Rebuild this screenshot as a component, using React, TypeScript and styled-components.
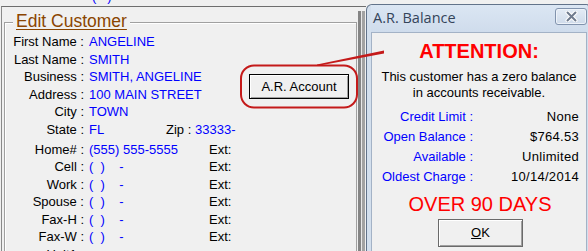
import React from "react";
import styled, { createGlobalStyle } from "styled-components";

const GlobalStyle = createGlobalStyle`
  html, body { margin: 0; padding: 0; background: #f0f0f0; overflow: hidden; }
  body { font-family: "Liberation Sans", Arial, sans-serif; font-size: 13px; color: #000; }
  #root { width: 588px; height: 251px; overflow: hidden; position: relative; }
  * { box-sizing: border-box; }
`;

const Page = styled.div`
  position: relative;
  width: 588px;
  height: 251px;
  overflow: hidden;
  display: flex;
  align-items: flex-start;
`;

/* ---------- left: Edit Customer window ---------- */
const LeftWindow = styled.div`
  flex: none;
  width: 365px;
  height: 251px;
  margin-left: 1px;
  display: flex;
  flex-direction: column;
`;

const TopStrip = styled.div`
  flex: none;
  height: 6px;
  overflow: hidden;
  padding-left: 91px;
`;

const ClippedText = styled.div`
  color: #0000ff;
  white-space: pre;
  line-height: 13px;
  margin-top: -10px;
`;

const Frame = styled.div`
  flex: 1;
  min-height: 0;
  overflow: hidden;
  display: flex;
  align-items: flex-start;
  border-top: 1px solid #6e6e6e;
  border-left: 1px solid #8a8a8a;
`;

const GroupBox = styled.div`
  flex: none;
  width: 353px;
  height: 240px;
  margin: 15px 0 0 2px;
  border: 1px solid #a0a0a0;
  border-bottom: none;
  box-shadow: inset 1px 1px 0 #ffffff;
`;

const Legend = styled.div`
  width: fit-content;
  margin: -12px 0 0 8px;
  padding: 0 3px;
  background: #f0f0f0;
  font-size: 17.5px;
  line-height: 20px;
  color: #8a4500;
  text-decoration: underline;
  text-underline-offset: 2px;
`;

const FormBody = styled.div`
  display: flex;
  margin-top: 2.25px;
`;

const Fields = styled.div`
  width: 244px;
  display: flex;
  flex-direction: column;
`;

const Row = styled.div<{ $gap?: number }>`
  display: flex;
  height: 17.5px;
  line-height: 17.5px;
  white-space: nowrap;
  margin-top: ${(p) => p.$gap ?? 0}px;
`;

const Label = styled.span`
  flex: none;
  width: 79px;
  text-align: right;
`;

const Value = styled.span<{ $w?: number }>`
  flex: none;
  margin-left: 5px;
  color: #0000ff;
  white-space: pre;
  width: ${(p) => (p.$w ? `${p.$w}px` : "auto")};
`;

const SubLabel = styled.span<{ $w?: number }>`
  flex: none;
  width: ${(p) => (p.$w ? `${p.$w}px` : "auto")};
`;

const SubValue = styled.span`
  color: #0000ff;
`;

const Side = styled.div`
  padding-top: 40.75px;
`;

const ARButton = styled.button`
  width: 100px;
  height: 25px;
  padding: 0;
  border: 1px solid #000;
  background: #f0f0f0;
  box-shadow: inset 1px 1px 0 #ffffff, inset -1px -1px 0 #a0a0a0;
  font-family: "Liberation Sans", Arial, sans-serif;
  font-size: 13px;
  color: #000;
`;

const Bar = styled.div`
  flex: none;
  width: 7px;
  height: 240px;
  margin: 4px 0 0 1px;
  border-left: 3px solid #858585;
  border-right: 3px solid #a2a2a2;
  background: #e8e8e8;
`;

/* ---------- right: A.R. Balance dialog ---------- */
const Dialog = styled.div`
  flex: none;
  width: 226px;
  height: 250px;
  margin-top: 4px;
  border: 1px solid #62738a;
  border-bottom: none;
  border-radius: 6px 6px 0 0;
  background: #d3dfed;
  padding: 0 4px;
  display: flex;
  flex-direction: column;
`;

const TitleBar = styled.div`
  flex: none;
  height: 27px;
  display: flex;
  justify-content: space-between;
  align-items: flex-start;
  padding-left: 2px;
  background: linear-gradient(#dbe6f3, #cfdcec);
`;

const Title = styled.span`
  font-family: "Open Sans", "Liberation Sans", sans-serif;
  font-size: 14.5px;
  line-height: 26px;
  color: #34445a;
`;

const CloseButton = styled.div`
  width: 32px;
  height: 17px;
  margin-top: 3px;
  border: 1px solid #8193ad;
  border-radius: 3px;
  background: linear-gradient(#e4ecf6, #cfdbea);
  box-shadow: inset 0 0 0 1px #eef3f9;
  display: flex;
  align-items: center;
  justify-content: center;
`;

const Client = styled.div`
  flex: 1;
  background: #f0f0f0;
  border: 1px solid #a3b2c6;
  border-bottom: none;
  display: flex;
  flex-direction: column;
  align-items: center;
`;

const Attention = styled.div`
  margin-top: 5.7px;
  font-size: 20px;
  line-height: 24px;
  font-weight: bold;
  color: #ff0000;
`;

const Message = styled.div`
  margin-top: 6.3px;
  line-height: 16px;
  text-align: center;
`;

const Info = styled.div`
  margin-top: 6px;
  align-self: stretch;
  display: flex;
  flex-direction: column;
`;

const InfoRow = styled.div`
  display: flex;
  height: 20px;
  line-height: 20px;
  white-space: nowrap;
`;

const InfoLabel = styled.span`
  flex: none;
  width: 101px;
  text-align: right;
  color: #0000ff;
`;

const InfoValue = styled.span`
  flex: 1;
  text-align: right;
  padding-right: 7px;
  letter-spacing: 0.3px;
`;

const Warning = styled.div`
  margin-top: 4.7px;
  font-size: 20px;
  line-height: 24px;
  color: #ff0000;
  padding-left: 2px;
`;

const OkButton = styled.button`
  margin-top: 3.3px;
  margin-left: 3px;
  width: 85px;
  height: 28px;
  padding: 0;
  border: 1px solid #6a6a6a;
  background: #f0f0f0;
  box-shadow: inset 1px 1px 0 #ffffff, inset -1px -1px 0 #a0a0a0;
  font-family: "Liberation Sans", Arial, sans-serif;
  font-size: 13px;
  color: #000;
`;

const Underlined = styled.span`
  text-decoration: underline;
`;

const Annotation = styled.svg`
  position: absolute;
  left: 0;
  top: 0;
  pointer-events: none;
`;

type Field = { label: string; value: string };

const topFields: Field[] = [
  { label: "First Name :", value: "ANGELINE" },
  { label: "Last Name :", value: "SMITH" },
  { label: "Business :", value: "SMITH, ANGELINE" },
  { label: "Address :", value: "100 MAIN STREET" },
  { label: "City :", value: "TOWN" },
];

const phones: Field[] = [
  { label: "Home# :", value: "(555) 555-5555" },
  { label: "Cell :", value: "(  )    -" },
  { label: "Work :", value: "(  )    -" },
  { label: "Spouse :", value: "(  )    -" },
  { label: "Fax-H :", value: "(  )    -" },
  { label: "Fax-W :", value: "(  )    -" },
];

const info: Field[] = [
  { label: "Credit Limit :", value: "None" },
  { label: "Open Balance :", value: "$764.53" },
  { label: "Available :", value: "Unlimited" },
  { label: "Oldest Charge :", value: "10/14/2014" },
];

export default function App() {
  return (
    <>
      <GlobalStyle />
      <Page>
        <LeftWindow>
          <TopStrip>
            <ClippedText>{"(   )"}</ClippedText>
          </TopStrip>
          <Frame>
            <GroupBox>
              <Legend>Edit Customer</Legend>
              <FormBody>
                <Fields>
                  {topFields.map((f) => (
                    <Row key={f.label}>
                      <Label>{f.label}</Label>
                      <Value>{f.value}</Value>
                    </Row>
                  ))}
                  <Row>
                    <Label>State :</Label>
                    <Value $w={77}>FL</Value>
                    <SubLabel $w={29}>Zip :</SubLabel>
                    <SubValue>33333-</SubValue>
                  </Row>
                  {phones.map((f, i) => (
                    <Row key={f.label} $gap={i === 0 ? 2.5 : 0}>
                      <Label>{f.label}</Label>
                      <Value $w={120}>{f.value}</Value>
                      <SubLabel>Ext:</SubLabel>
                    </Row>
                  ))}
                  <Row>
                    <Label>Unit1 :</Label>
                  </Row>
                </Fields>
                <Side>
                  <ARButton>A.R. Account</ARButton>
                </Side>
              </FormBody>
            </GroupBox>
            <Bar />
          </Frame>
        </LeftWindow>

        <Dialog>
          <TitleBar>
            <Title>A.R. Balance</Title>
            <CloseButton>
              <svg width="13" height="11" viewBox="0 0 13 11">
                <path d="M2.5 1.5 L10.5 9.5 M10.5 1.5 L2.5 9.5" stroke="#ffffff" strokeWidth="4" strokeLinecap="round" />
                <path d="M2.5 1.5 L10.5 9.5 M10.5 1.5 L2.5 9.5" stroke="#6f7b8e" strokeWidth="2" strokeLinecap="round" />
              </svg>
            </CloseButton>
          </TitleBar>
          <Client>
            <Attention>ATTENTION:</Attention>
            <Message>
              This customer has a zero balance
              <br />
              in accounts receivable.
            </Message>
            <Info>
              {info.map((f) => (
                <InfoRow key={f.label}>
                  <InfoLabel>{f.label}</InfoLabel>
                  <InfoValue>{f.value}</InfoValue>
                </InfoRow>
              ))}
            </Info>
            <Warning>OVER 90 DAYS</Warning>
            <OkButton>
              <Underlined>O</Underlined>K
            </OkButton>
          </Client>
        </Dialog>

        <Annotation width="588" height="251" viewBox="0 0 588 251">
          <rect x="241" y="65.5" width="116" height="42" rx="13" ry="13" fill="none" stroke="#c41a1a" strokeWidth="2" />
          <polygon points="317,64.6 384,50.6 384,53.6 317,66" fill="#c41a1a" />
        </Annotation>
      </Page>
    </>
  );
}
